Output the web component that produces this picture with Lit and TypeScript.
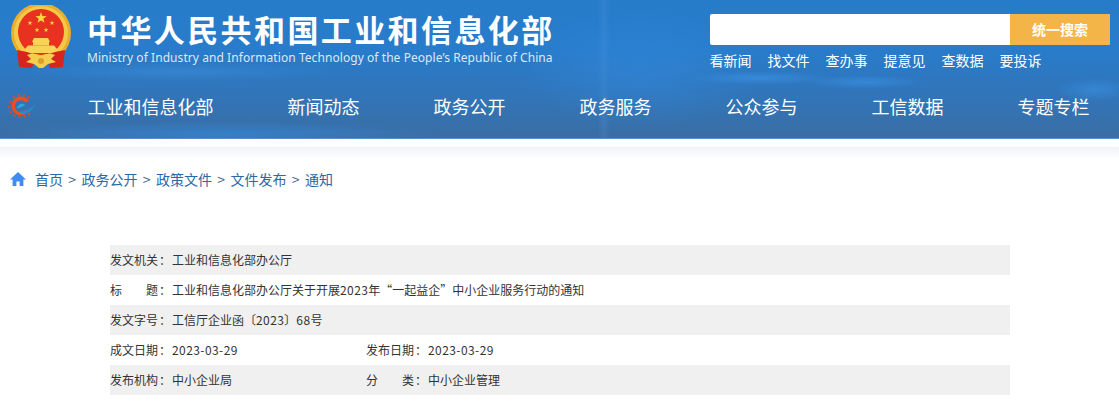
import { LitElement, html, css, svg } from 'lit';
import { customElement } from 'lit/decorators.js';

const NAV = ['工业和信息化部', '新闻动态', '政务公开', '政务服务', '公众参与', '工信数据', '专题专栏'];
const QUICK = ['看新闻', '找文件', '查办事', '提意见', '查数据', '要投诉'];
const CRUMBS = ['首页', '政务公开', '政策文件', '文件发布', '通知'];

const star = (cx: number, cy: number, r: number) => {
    const pts: string[] = [];
    for (let i = 0; i < 10; i++) {
        const a = (-90 + i * 36) * Math.PI / 180;
        const d = i % 2 ? r * 0.4 : r;
        pts.push(`${(cx + d * Math.cos(a)).toFixed(2)},${(cy + d * Math.sin(a)).toFixed(2)}`);
    }
    return svg`<polygon points=${pts.join(' ')} fill="#ffd83c"/>`;
};

const emblem = html`<svg class="emblem" width="62" height="64" viewBox="0 0 62 64">
  <circle cx="31" cy="28" r="30" fill="#e9ae2c"/>
  <circle cx="31" cy="28" r="27" fill="#f4c94a"/>
  <circle cx="31" cy="27" r="23" fill="#e8321f"/>
  ${star(31, 13, 6)}${star(20, 18, 2.6)}${star(42, 18, 2.6)}${star(27, 25, 2.5)}${star(36, 25, 2.5)}
  <path d="M22 37 L24 33 L38 33 L40 37 Z" fill="#f6d556"/>
  <rect x="23" y="37" width="16" height="3.5" fill="#f6d556"/>
  <path d="M15 44 L18 40.5 L44 40.5 L47 44 L47 48 L15 48 Z" fill="#f6d556"/>
  <path d="M7 45 L17 47 L26 50 L22 63 L9 62 Z" fill="#d6251d"/>
  <path d="M55 45 L45 47 L36 50 L40 63 L53 62 Z" fill="#d6251d"/>
  <path d="M17 50 Q24 47 31 51 Q38 47 45 50 L41 54 L46 57 L38 59 L33 63 L29 63 L24 59 L16 57 L21 54 Z" fill="#f4cf4e"/>
  <circle cx="31" cy="56" r="3" fill="#d9a128"/>
</svg>`;

const miniLogo = html`<svg class="mini" width="28" height="24" viewBox="0 0 28 24">
  <g fill="#dd4a26">
    <circle cx="11" cy="1.4" r="1.3"/><circle cx="16" cy="1.4" r="1.2"/><circle cx="5.6" cy="3.4" r="1.3"/>
    <circle cx="20.6" cy="3.2" r="1.2"/><circle cx="2" cy="8" r="1.2"/><circle cx="1" cy="13" r="1.2"/>
    <circle cx="2.6" cy="18" r="1.2"/><circle cx="6.4" cy="21.4" r="1.2"/><circle cx="11.4" cy="22.8" r="1.2"/>
    <circle cx="16.4" cy="22.4" r="1.2"/><circle cx="21" cy="20" r="1.2"/>
  </g>
  <path d="M21 7 A9.4 9.4 0 1 0 20.5 17.6 L17.6 16 A6 6 0 1 1 17.6 8.4 Z" fill="#ea4f22"/>
  <path d="M8.6 14.4 C10 9.4 15.6 8.4 17 11.2 C14.6 12.6 11.6 13.8 8.6 14.4 Z" fill="#2aa6da"/>
  <path d="M11 17.6 C18 18 24 14.4 27.4 9.6 C26.4 15 20 20.4 13 19.6 Z" fill="#1c8fce"/>
</svg>`;

// digit runs are set a little wider, as the hinted numerals of the original are
const spaced = (text: string) =>
    text.split(/([0-9-]+)/).map((part, i) => (i % 2 ? html`<span class="num">${part}</span>` : part));

@customElement('app-root')
export class AppRoot extends LitElement {
    static styles = css`
    :host {
      display: block;
      height: 414px;
      overflow: hidden;
      background: #fff;
      font-family: "Noto Sans CJK SC", "Noto Sans", sans-serif;
    }

    .header {
      height: 139px;
      box-sizing: border-box;
      color: #fff;
      border-bottom: 1px solid #5a8fc6;
      background:
        radial-gradient(ellipse 60px 7px at 865px 82px, rgba(60, 150, 235, 0.55), transparent),
        radial-gradient(ellipse 70px 7px at 760px 78px, rgba(60, 150, 235, 0.6), transparent),
        radial-gradient(ellipse 40px 12px at 1095px 90px, rgba(60, 150, 235, 0.5), transparent),
        radial-gradient(ellipse 160px 10px at 180px 72px, rgba(70, 150, 230, 0.35), transparent),
        radial-gradient(ellipse 220px 12px at 220px 134px, rgba(50, 140, 225, 0.6), transparent),
        radial-gradient(ellipse 120px 60px at 640px 70px, rgba(50, 140, 225, 0.45), transparent),
        linear-gradient(90deg, transparent 598px, rgba(120, 180, 240, 0.12) 604px, transparent 610px),
        linear-gradient(180deg, #277cca 0%, #287ccb 35%, #2f76bd 62%, #3a6ea4 100%);
    }

    .top {
      display: flex;
      height: 76px;
    }

    .emblem {
      flex: none;
      margin: 5px 0 0 10px;
    }

    .brand {
      margin-left: 15px;
      padding-top: 6px;
      width: 623px;
    }

    .brand h1 {
      margin: 0;
      font-size: 31px;
      line-height: 45px;
      font-weight: 700;
      letter-spacing: 2.4px;
      white-space: nowrap;
    }

    .brand p {
      margin: 0;
      font-family: "Noto Sans", sans-serif;
      font-size: 12px;
      line-height: 14px;
      letter-spacing: 0.065px;
      color: #dbe8f6;
      white-space: nowrap;
    }

    .tools {
      padding-top: 14px;
      width: 400px;
    }

    .search {
      display: flex;
      height: 31px;
      border-radius: 2px;
      overflow: hidden;
      background: #fff;
    }

    .search .field {
      flex: 1;
    }

    .search .btn {
      width: 100px;
      background: #f3b548;
      font-size: 14px;
      font-weight: 700;
      line-height: 31px;
      text-align: center;
    }

    .quick {
      display: flex;
      gap: 16px;
      margin: 5px 0 0 -0.5px;
      font-size: 14px;
      line-height: 20px;
      white-space: nowrap;
    }

    .navbar {
      display: flex;
      align-items: center;
      height: 62px;
      padding-bottom: 2px;
      box-sizing: border-box;
    }

    .mini {
      flex: none;
      margin-left: 8px;
    }

    .nav {
      display: flex;
      gap: 74px;
      margin-left: 51.5px;
      font-size: 18px;
      line-height: 26px;
      white-space: nowrap;
    }

    .strip {
      height: 8px;
    }

    .shade {
      height: 12px;
      background: linear-gradient(180deg, #f1f3f7, #fff);
    }

    .crumbs {
      display: flex;
      align-items: center;
      height: 20px;
      margin-top: 10px;
      padding-left: 10px;
      font-size: 14px;
      color: #2a68a8;
      white-space: nowrap;
    }

    .crumbs svg {
      flex: none;
      margin-right: 9px;
    }

    .crumbs .sep {
      width: 18.5px;
      text-align: center;
      color: #45648a;
    }

    .info {
      margin: 56px 0 0 110px;
      width: 900px;
      font-size: 12px;
      color: #333;
    }

    .row {
      display: flex;
      height: 30px;
      line-height: 30px;
      white-space: nowrap;
    }

    .row:nth-child(odd) {
      background: #f0f0f0;
    }

    .cell {
      display: flex;
      width: 256px;
    }

    .cell.wide {
      width: auto;
    }

    .label {
      display: flex;
      justify-content: space-between;
      width: 48px;
    }

    .colon {
      width: 14px;
      text-align: center;
    }

    .num {
      letter-spacing: 0.42px;
    }
  `;

    private cell(label: string, value: string, wide = false) {
        // "标 题" style labels are spread across the label width
        const chars = label.length === 2 ? label.split('') : [label];
        return html`<div class="cell ${wide ? 'wide' : ''}">
        <span class="label">${chars.map(c => html`<span>${c}</span>`)}</span>
        <span class="colon">：</span>
        <span>${spaced(value)}</span>
      </div>`;
    }

    render() {
        return html`
      <div class="header">
        <div class="top">
          ${emblem}
          <div class="brand">
            <h1>中华人民共和国工业和信息化部</h1>
            <p lang="en">Ministry of Industry and Information Technology of the People’s Republic of China</p>
          </div>
          <div class="tools">
            <div class="search">
              <div class="field"></div>
              <div class="btn">统一搜索</div>
            </div>
            <div class="quick">${QUICK.map(q => html`<span>${q}</span>`)}</div>
          </div>
        </div>
        <div class="navbar">
          ${miniLogo}
          <div class="nav">${NAV.map(n => html`<span>${n}</span>`)}</div>
        </div>
      </div>
      <div class="strip"></div>
      <div class="shade"></div>
      <div class="crumbs">
        <svg width="16" height="14" viewBox="0 0 16 14">
          <path d="M8 0 L16 7.4 L13.4 7.4 V14 H9.6 V9.6 H6.4 V14 H2.6 V7.4 L0 7.4 Z" fill="#3f8cf0"/>
        </svg>
        ${CRUMBS.map((c, i) => html`${i ? html`<span class="sep">&gt;</span>` : ''}<span>${c}</span>`)}
      </div>
      <div class="info">
        <div class="row">${this.cell('发文机关', '工业和信息化部办公厅', true)}</div>
        <div class="row">${this.cell('标题', '工业和信息化部办公厅关于开展2023年“一起益企”中小企业服务行动的通知', true)}</div>
        <div class="row">${this.cell('发文字号', '工信厅企业函〔2023〕68号', true)}</div>
        <div class="row">${this.cell('成文日期', '2023-03-29')}${this.cell('发布日期', '2023-03-29')}</div>
        <div class="row">${this.cell('发布机构', '中小企业局')}${this.cell('分类', '中小企业管理')}</div>
      </div>
    `;
    }
}
